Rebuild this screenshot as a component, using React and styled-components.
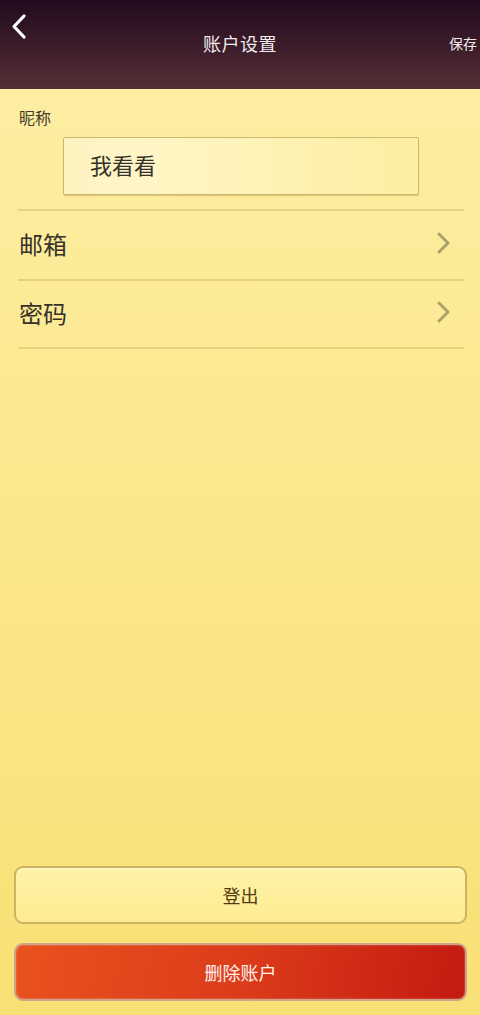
import React, { useState } from 'react';
import styled, { createGlobalStyle } from 'styled-components';

const GlobalStyle = createGlobalStyle`
  html, body {
    margin: 0;
    padding: 0;
  }
  body {
    font-family: 'Noto Sans CJK SC', 'Noto Sans', sans-serif;
  }
  * {
    box-sizing: border-box;
  }
`;

const Page = styled.div`
  width: 480px;
  height: 1015px;
  display: flex;
  flex-direction: column;
  background: linear-gradient(180deg, #fdefa6 0%, #fbe68a 55%, #f9e075 100%);
  overflow: hidden;
`;

const TopBar = styled.header`
  position: relative;
  height: 89px;
  flex-shrink: 0;
  display: flex;
  align-items: center;
  justify-content: center;
  padding-bottom: 3px;
  background: linear-gradient(180deg, #210b1f 0%, #3b1c2a 50%, #552f35 100%);
`;

const BackButton = styled.button`
  position: absolute;
  left: 8px;
  top: 10px;
  width: 24px;
  height: 34px;
  padding: 0;
  border: none;
  background: none;
  cursor: pointer;
`;

const Title = styled.h1`
  margin: 0;
  font-size: 18px;
  font-weight: 400;
  color: #f2ecee;
  letter-spacing: 0.5px;
`;

const SaveButton = styled.button`
  position: absolute;
  right: 3px;
  top: 33px;
  padding: 0;
  border: none;
  background: none;
  font-family: inherit;
  font-size: 14px;
  color: #f2ecee;
  cursor: pointer;
`;

const Content = styled.main`
  flex: 1;
  padding: 18px 16px 0 18px;
  display: flex;
  flex-direction: column;
`;

const FieldLabel = styled.div`
  font-size: 16px;
  line-height: 20px;
  color: #433a2a;
  padding-left: 1px;
`;

const NameInput = styled.input`
  display: block;
  width: 356px;
  height: 58px;
  margin: 10px 0 14px 45px;
  padding: 0 0 4px 26px;
  border: 1px solid #cdb870;
  border-radius: 2px;
  background: linear-gradient(90deg, #fdf3c0 0%, #fff6c8 20%, #fdeea0 100%);
  box-shadow: 0 1px 1px rgba(150, 120, 40, 0.35);
  font-family: inherit;
  font-size: 22px;
  color: #36322a;
  outline: none;
`;

const Row = styled.button`
  display: flex;
  align-items: center;
  justify-content: space-between;
  width: 100%;
  height: 70px;
  padding: 0 12px 4px 1px;
  border: none;
  border-top: 2px solid #e8d17e;
  border-bottom: ${p => (p.$last ? '2px solid #e8d17e' : 'none')};
  background: none;
  font-family: inherit;
  cursor: pointer;
  text-align: left;
`;

const RowText = styled.span`
  font-size: 24px;
  color: #36322a;
`;

const Spacer = styled.div`
  flex: 1;
`;

const Actions = styled.div`
  display: flex;
  flex-direction: column;
  gap: 19px;
  padding: 0 13px 14px 14px;
`;

const ActionButton = styled.button`
  width: 100%;
  height: 58px;
  border-radius: 9px;
  font-family: inherit;
  font-size: 18px;
  cursor: pointer;
  border: ${p => (p.$danger ? '2px solid #cfa488' : '2px solid #cdb260')};
  color: ${p => (p.$danger ? '#fff4ee' : '#553810')};
  background: ${p =>
    p.$danger
      ? 'linear-gradient(100deg, #e9521f 0%, #dc3c1a 50%, #c41a10 100%)'
      : 'linear-gradient(180deg, #fff3a8 0%, #feec92 100%)'};
  box-shadow: ${p =>
    p.$danger ? 'inset 0 0 2px rgba(255,255,255,0.4)' : 'inset 0 1px 0 rgba(255,255,255,0.5)'};
`;

const Chevron = ({ color, width = 3 }) => (
  <svg width="16" height="22" viewBox="0 0 16 22" fill="none">
    <path d="M3 2l9 9-9 9" stroke={color} strokeWidth={width} strokeLinecap="round" strokeLinejoin="round" />
  </svg>
);

const BackIcon = () => (
  <svg width="24" height="34" viewBox="0 0 24 34" fill="none">
    <path d="M16 6L6 16.5 16 27" stroke="#ffffff" strokeWidth="3.2" strokeLinecap="round" strokeLinejoin="round" />
  </svg>
);

export default function App() {
  const [nickname, setNickname] = useState('我看看');

  return (
    <>
      <GlobalStyle />
      <Page>
        <TopBar>
          <BackButton aria-label="返回">
            <BackIcon />
          </BackButton>
          <Title>账户设置</Title>
          <SaveButton>保存</SaveButton>
        </TopBar>

        <Content>
          <FieldLabel>昵称</FieldLabel>
          <NameInput value={nickname} onChange={e => setNickname(e.target.value)} />

          <Row>
            <RowText>邮箱</RowText>
            <Chevron color="#aaa268" />
          </Row>
          <Row $last>
            <RowText>密码</RowText>
            <Chevron color="#aaa268" />
          </Row>
          <Spacer />
        </Content>

        <Actions>
          <ActionButton>登出</ActionButton>
          <ActionButton $danger>删除账户</ActionButton>
        </Actions>
      </Page>
    </>
  );
}
